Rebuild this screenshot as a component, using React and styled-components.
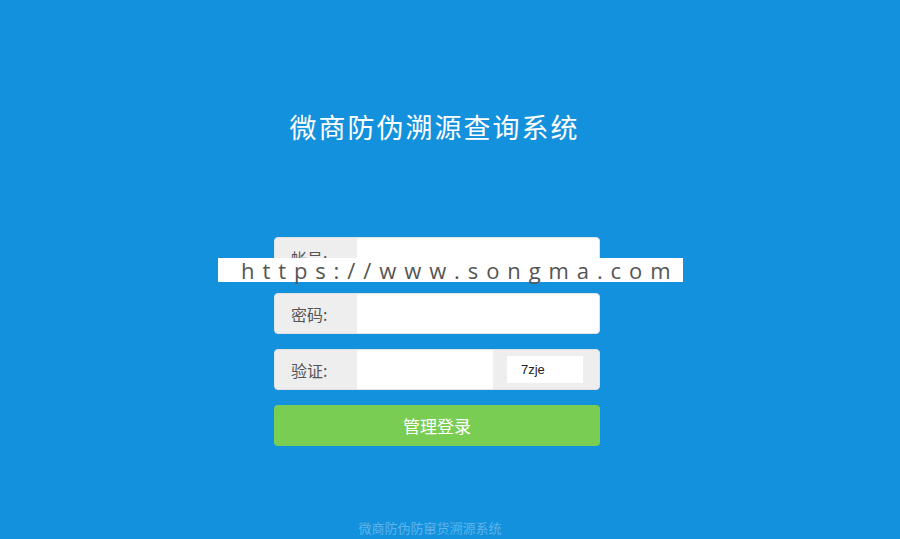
import React from "react";
import styled, { createGlobalStyle } from "styled-components";

const GlobalStyle = createGlobalStyle`
  html, body {
    margin: 0;
    padding: 0;
    background: #1391dc;
  }
  body {
    font-family: "Noto Sans CJK SC", "Noto Sans", sans-serif;
  }
`;

const fields = [
  { label: "帐号:", type: "text" },
  { label: "密码:", type: "password" },
];

const App = () => {
  return (
    <Page>
      <GlobalStyle />
      <Title>微商防伪溯源查询系统</Title>
      <Form>
        {fields.map((f) => (
          <Row key={f.label}>
            <Label>{f.label}</Label>
            <Input type={f.type} />
          </Row>
        ))}
        <Row>
          <Label>验证:</Label>
          <Input type="text" />
          <CaptchaBox>
            <Captcha>7zje</Captcha>
          </CaptchaBox>
        </Row>
        <Submit>管理登录</Submit>
      </Form>
      <Footer>微商防伪防窜货溯源系统</Footer>
      <Watermark>https://www.songma.com</Watermark>
    </Page>
  );
};

//
//Layout
//
const Page = styled.div`
  position: relative;
  height: 539px;
  padding-right: 26px;
  box-sizing: border-box;
  display: flex;
  flex-direction: column;
  align-items: center;
  overflow: hidden;
`;

const Title = styled.h1`
  margin: 107px 0 0;
  padding-right: 5px;
  font-size: 27px;
  font-weight: 400;
  letter-spacing: 2px;
  line-height: 40px;
  color: #fff;
`;

//
//Form
//
const Form = styled.div`
  margin-top: 90px;
  width: 326px;
  display: flex;
  flex-direction: column;
  gap: 15px;
`;

const Row = styled.div`
  display: flex;
  height: 41px;
  border-radius: 4px;
  overflow: hidden;
  background: #eeeeee;
  border: 1px solid #e2e2e2;
  box-sizing: border-box;
`;

const Label = styled.span`
  width: 82px;
  flex-shrink: 0;
  display: flex;
  align-items: center;
  padding-left: 16px;
  box-sizing: border-box;
  font-size: 16px;
  color: #555;
`;

const Input = styled.input`
  flex: 1;
  min-width: 0;
  border: none;
  outline: none;
  background: #fff;
  padding: 0 10px;
  font-size: 15px;
`;

const CaptchaBox = styled.div`
  width: 106px;
  flex-shrink: 0;
  display: flex;
  align-items: center;
  padding-left: 14px;
  box-sizing: border-box;
`;

const Captcha = styled.div`
  width: 76px;
  height: 27px;
  background: #fff;
  display: flex;
  align-items: center;
  padding-left: 14px;
  box-sizing: border-box;
  font-family: "Liberation Sans", sans-serif;
  font-size: 13px;
  color: #222;
`;

const Submit = styled.button`
  height: 41px;
  border: none;
  border-radius: 4px;
  background: #79cd53;
  color: #fff;
  font-family: "Noto Sans CJK SC", sans-serif;
  font-size: 17px;
  cursor: pointer;
`;

const Footer = styled.div`
  margin-top: auto;
  margin-bottom: 2px;
  padding-right: 14px;
  font-size: 13px;
  color: #5fb3ea;
  line-height: 18px;
`;

//
//Overlay
//
const Watermark = styled.div`
  position: absolute;
  left: 218px;
  top: 258px;
  width: 465px;
  height: 24px;
  background: #fff;
  padding-left: 23px;
  box-sizing: border-box;
  font-family: "Open Sans", sans-serif;
  font-size: 22px;
  line-height: 24px;
  letter-spacing: 7.9px;
  color: #555;
  white-space: nowrap;
`;

export default App;
